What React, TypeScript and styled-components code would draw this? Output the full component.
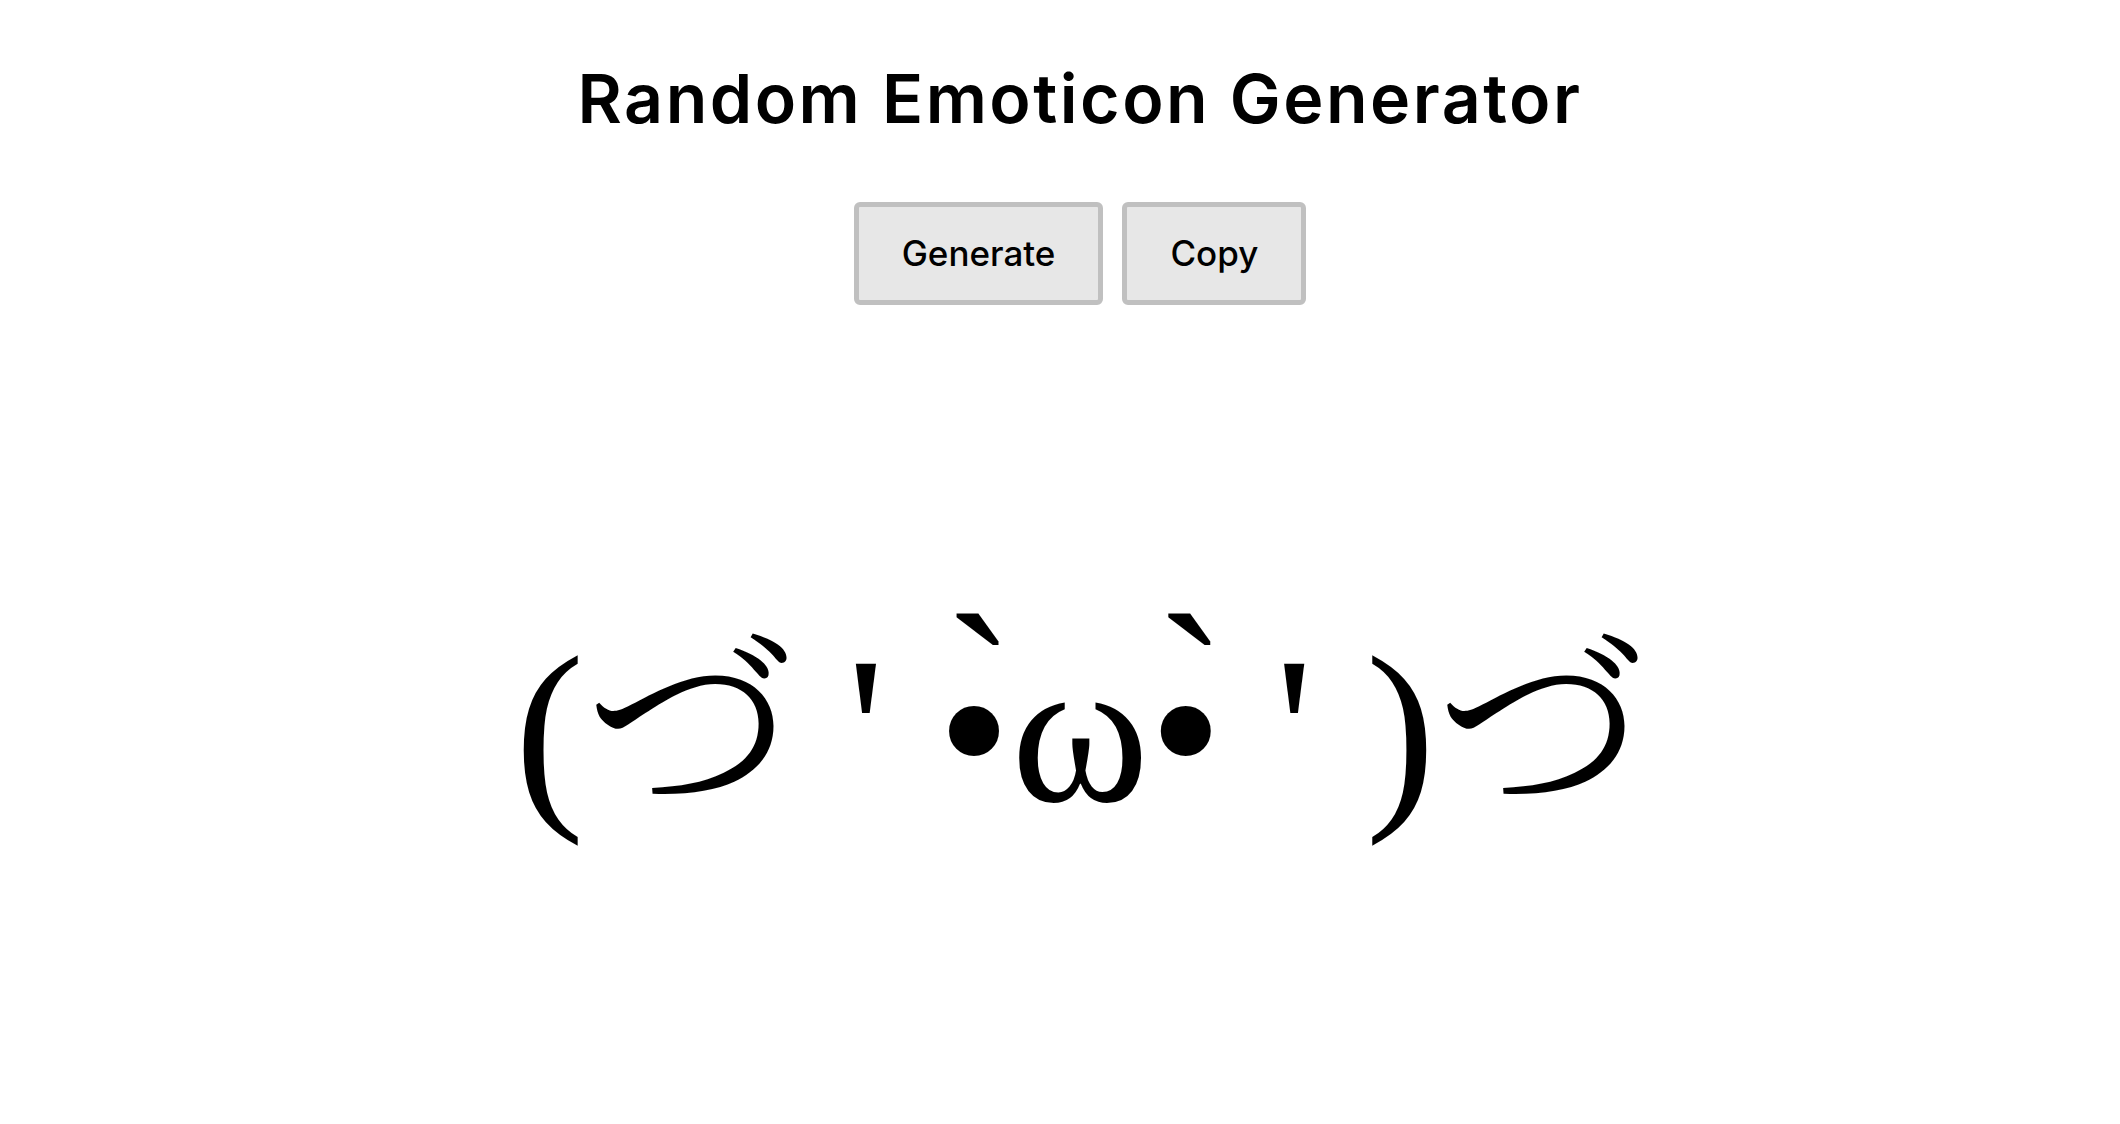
import React, { FC, useState } from 'react';
import styled, { createGlobalStyle } from 'styled-components';

const EMOTICONS = ["(づ ' •̀ω•̀ ' )づ"];

const GlobalStyle = createGlobalStyle`
  body {
    margin: 8px;
    background: #ffffff;
    color: #000000;
    font-family: 'Inter', 'Noto Sans', sans-serif;
  }
`;

const Page = styled.main`
  width: 100%;
  padding: 0 20px;
  display: flex;
  flex-direction: column;
  align-items: center;
`;

const Title = styled.h1`
  margin: 50px 0 0;
  font-size: 68px;
  font-weight: 600;
  line-height: 1.2;
  letter-spacing: 2.5px;
`;

const ButtonRow = styled.div`
  display: flex;
  gap: 19px;
  margin-top: 62px;
`;

const ActionButton = styled.button`
  font-family: 'Inter', 'Noto Sans', sans-serif;
  font-size: 35px;
  font-weight: 500;
  line-height: 45px;
  color: #000000;
  background: #e7e7e7;
  border: 5px solid #c0c0c0;
  border-radius: 6px;
  padding: 24px 43px;
  cursor: pointer;
`;

const Emoticon = styled.div`
  margin-top: 285px;
  font-family: 'Liberation Serif', serif;
  font-size: 210px;
  line-height: 240px;
  white-space: pre;
`;

// each run is its own inline-block so the latin glyphs keep the latin serif
// instead of being pulled into the kana font
const Part = styled.span<{ $kana: boolean }>`
  display: inline-block;
  font-family: ${(p) =>
    p.$kana ? "'Noto Serif CJK JP', serif" : "'Liberation Serif', serif"};
`;

const isKana = (s: string) => /[\u3040-\u30ff]/.test(s);

const splitFace = (face: string) =>
  face.split(/([\u3040-\u30ff]+)/).filter(Boolean);

const App: FC = () => {
  const [face, setFace] = useState(EMOTICONS[0]);

  const generate = () =>
    setFace(EMOTICONS[Math.floor(Math.random() * EMOTICONS.length)]);

  const copy = () => {
    navigator.clipboard?.writeText(face).catch(() => {});
  };

  return (
    <>
      <GlobalStyle />
      <Page>
        <Title>Random Emoticon Generator</Title>
        <ButtonRow>
          <ActionButton onClick={generate}>Generate</ActionButton>
          <ActionButton onClick={copy}>Copy</ActionButton>
        </ButtonRow>
        <Emoticon>
          {splitFace(face).map((part, i) => {
            const kana = isKana(part);
            return (
              <Part key={i} $kana={kana} lang={kana ? 'ja' : 'en'}>
                {part}
              </Part>
            );
          })}
        </Emoticon>
      </Page>
    </>
  );
};

export default App;
